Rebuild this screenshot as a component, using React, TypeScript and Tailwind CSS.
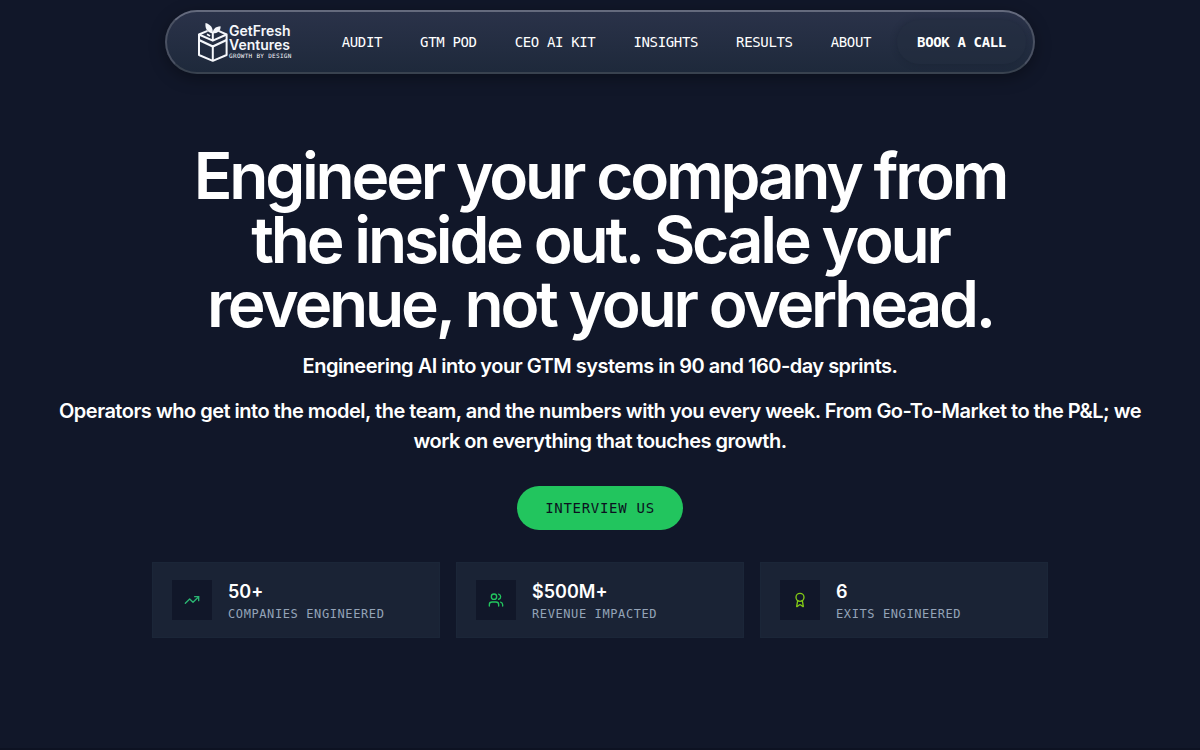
import { Award, TrendingUp, Users, type LucideIcon } from 'lucide-react'

type Stat = {
  value: string
  label: string
  icon: LucideIcon
  iconClass: string
}

const NAV_LINKS = [
  { label: 'AUDIT', href: '#audit' },
  { label: 'GTM POD', href: '#gtm-pod' },
  { label: 'CEO AI KIT', href: '#ceo-ai-kit' },
  { label: 'INSIGHTS', href: '#insights' },
  { label: 'RESULTS', href: '#results' },
  { label: 'ABOUT', href: '#about' },
]

const STATS: Stat[] = [
  { value: '50+', label: 'COMPANIES ENGINEERED', icon: TrendingUp, iconClass: 'text-[#2bb673]' },
  { value: '$500M+', label: 'REVENUE IMPACTED', icon: Users, iconClass: 'text-[#22c55e]' },
  { value: '6', label: 'EXITS ENGINEERED', icon: Award, iconClass: 'text-[#84cc16]' },
]

function Logo() {
  return (
    <a href="#home" className="flex shrink-0 items-center gap-px text-[#f5f7fb]">
      <svg viewBox="0 0 30 39" className="h-[39px] w-[30px]" fill="none" stroke="currentColor" strokeWidth="2" strokeLinejoin="round" aria-hidden="true">
        <path d="M9.5 7.8 1 11.5V32l13.8 5.8L28.6 32V11.5L20.5 7.8" />
        <path d="M1 11.5l13.8 6.2 13.8-6.2M14.8 23.5V38M14.8 9v8.500" />
        <path d="M1 17l13.800 6.500L28.600 17" strokeWidth="2.400" />
        <path d="M9 11.200l3 1.800" strokeWidth="1.600" />
        <path d="M14.800 10.500C9.300 9.500 6.800 5.500 7.500 0c5 1.300 7.800 4.800 7.300 10.500Z" fill="currentColor" stroke="none" />
        <path d="M14.800 10.500C14.600 6.500 17.200 3.600 22.600 3.300c.2 4.500-2.600 7.200-7.800 7.200Z" fill="currentColor" stroke="none" />
      </svg>
      <span className="flex flex-col">
        <span className="font-[Inter,sans-serif] text-[14px] leading-[14px] font-semibold">GetFresh</span>
        <span className="font-[Inter,sans-serif] text-[14px] leading-[14px] font-semibold">Ventures</span>
        <span className="font-['DejaVu_Sans_Mono',monospace] text-[6px] leading-[8px] tracking-wider">GROWTH BY DESIGN</span>
      </span>
    </a>
  )
}

function Header() {
  return (
    <header className="flex justify-center px-4 pt-[10px]">
      <nav
        aria-label="Main"
        className="flex h-16 items-center rounded-full border-2 border-t-[#646a7d] border-r-[#4a5162] border-b-[#39424f] border-l-[#4a5162] bg-linear-to-b from-[#2a3249] to-[#1e293b] pr-[7px] pl-[31px] shadow-[0_4px_16px_rgba(0,0,0,0.35)]"
      >
        <Logo />
        <ul className="ml-[50px] flex items-center gap-[38px] font-['DejaVu_Sans_Mono',monospace] text-[14px] leading-5 tracking-tight whitespace-nowrap text-white">
          {NAV_LINKS.map((link) => (
            <li key={link.href}>
              <a href={link.href}>{link.label}</a>
            </li>
          ))}
        </ul>
        <a
          href="#book"
          className="ml-[26px] flex h-11 items-center rounded-full bg-[#232d40]/60 px-5 font-['DejaVu_Sans_Mono',monospace] text-[14px] font-bold tracking-tight whitespace-nowrap text-white shadow-[0_0_6px_rgba(20,30,45,0.4)]"
        >
          BOOK A CALL
        </a>
      </nav>
    </header>
  )
}

function StatCard({ stat }: { stat: Stat }) {
  const Icon = stat.icon
  return (
    <li className="flex items-center gap-4 border border-[#1b2638] bg-[#1a2335] px-[19px] py-[15px]">
      <span className="flex size-10 shrink-0 items-center justify-center bg-[#111729]">
        <Icon className={`size-4 ${stat.iconClass}`} strokeWidth={2} aria-hidden="true" />
      </span>
      <span className="flex flex-col gap-0.5 pt-0.5">
        <span className="font-[Inter,sans-serif] text-[18px] leading-6 font-semibold text-white">{stat.value}</span>
        <span className="font-['DejaVu_Sans_Mono',monospace] text-[12px] leading-4 tracking-wider text-[#94a3b8]">{stat.label}</span>
      </span>
    </li>
  )
}

export default function App() {
  return (
    <div className="min-h-screen border-b-2 border-[#0d1222] bg-[#111729] font-[Inter,sans-serif] text-white">
      <Header />
      <main className="flex flex-col items-center px-12 pt-[70px] text-center">
        <h1 className="max-w-4xl text-[64px] leading-[64px] font-semibold tracking-tighter">
          Engineer your company from the inside out. Scale your revenue, not your overhead.
        </h1>
        <p className="mt-[15px] text-[20px] leading-[30px] font-semibold tracking-tight">
          Engineering AI into your GTM systems in 90 and 160-day sprints.
        </p>
        <p className="mt-[15px] text-[20px] leading-[30px] font-semibold tracking-tight">
          Operators who get into the model, the team, and the numbers with you every week. From Go-To-Market to the P&amp;L; we work on everything that touches growth.
        </p>
        <button
          type="button"
          className="mt-[30px] h-11 rounded-full bg-[#22c55e] px-7 font-['DejaVu_Sans_Mono',monospace] text-[14px] tracking-wider text-[#0b1120]"
        >
          INTERVIEW US
        </button>
        <ul className="mt-8 grid w-full max-w-4xl grid-cols-3 gap-4 text-left">
          {STATS.map((stat) => (
            <StatCard key={stat.label} stat={stat} />
          ))}
        </ul>
      </main>
    </div>
  )
}
